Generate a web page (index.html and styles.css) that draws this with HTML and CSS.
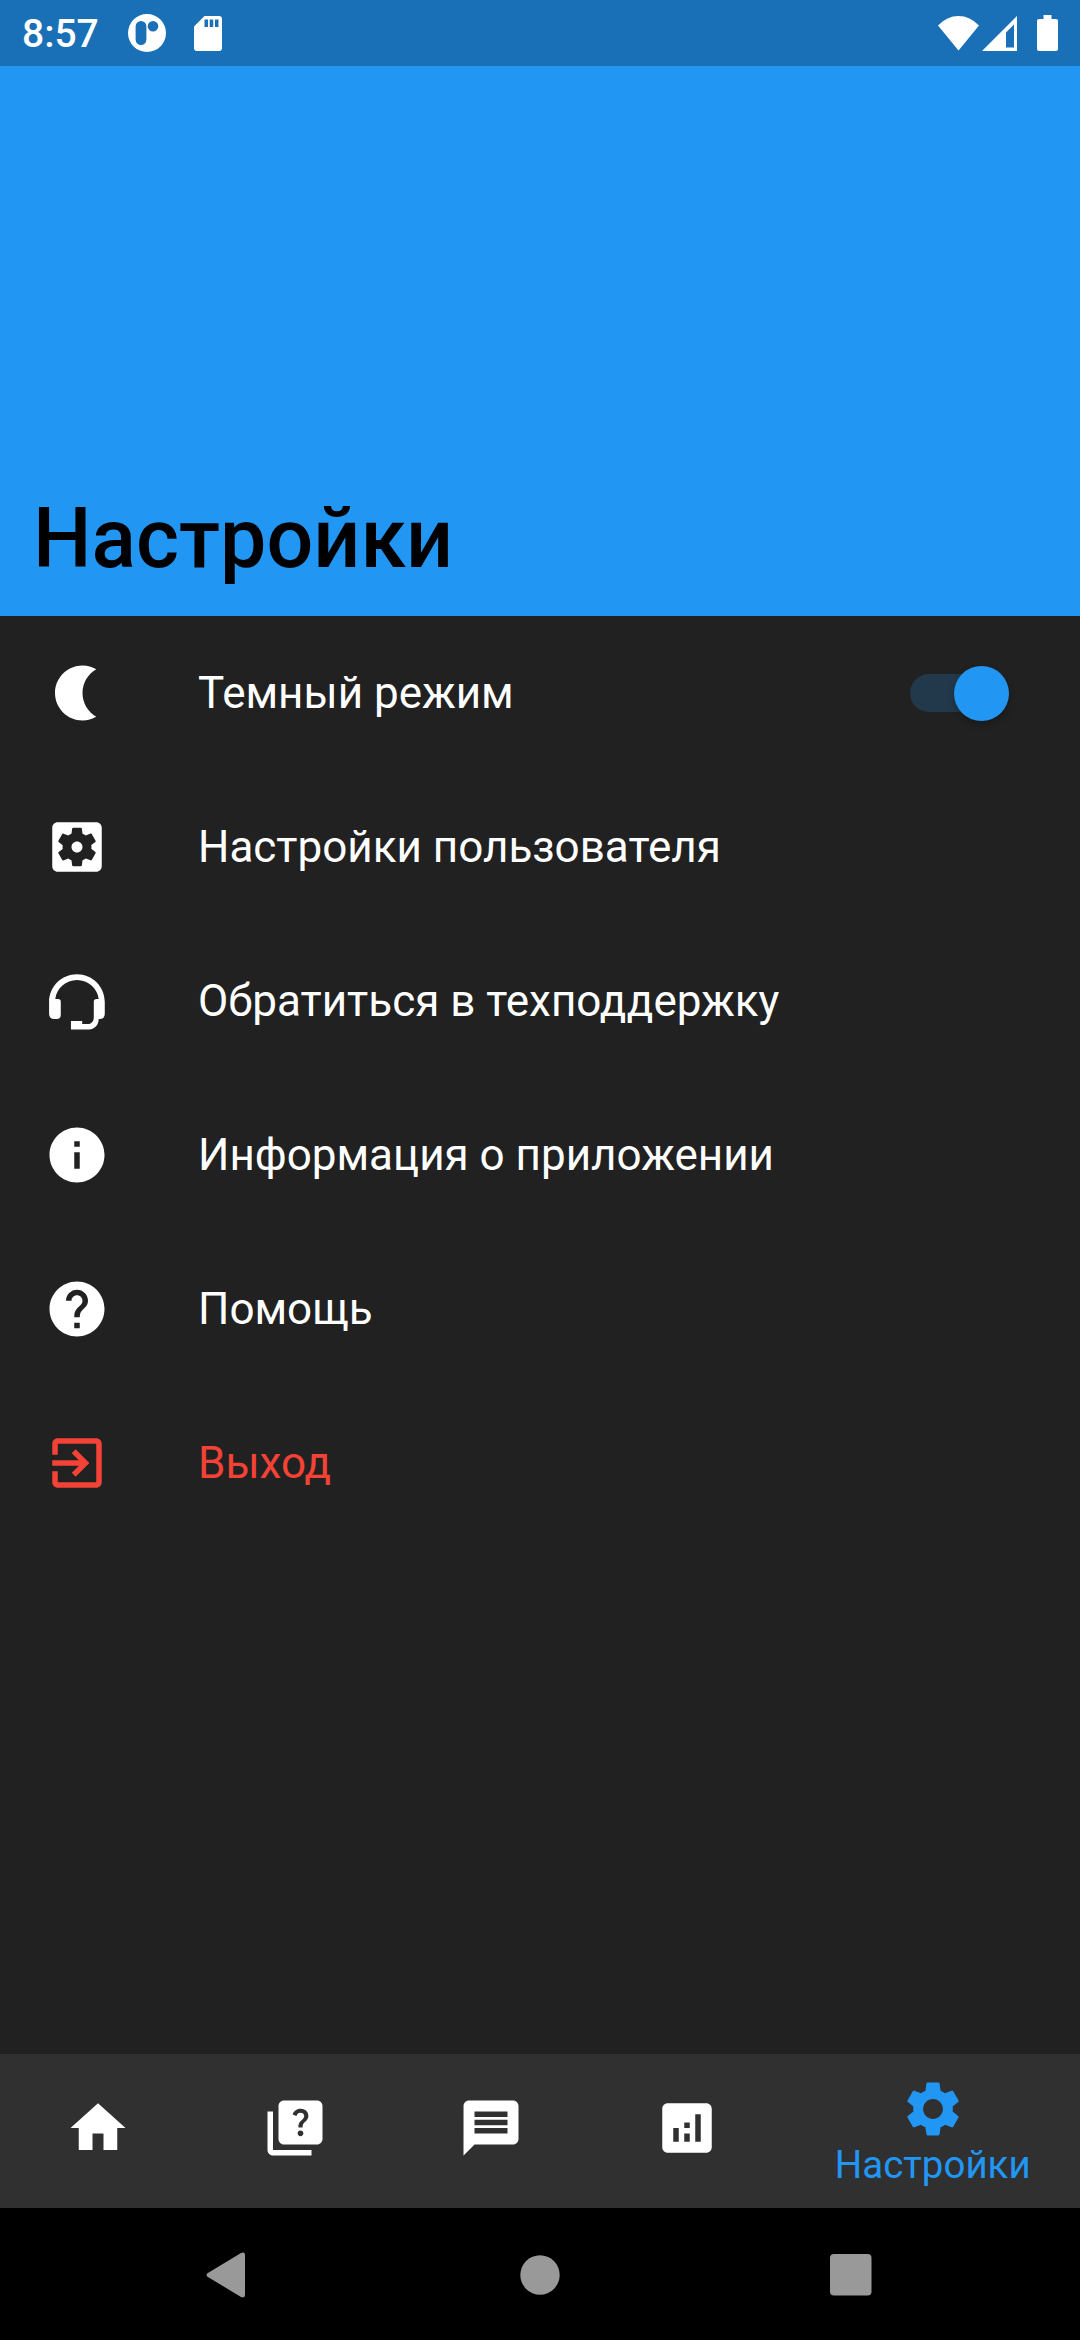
FILE: index.html
```html
<!DOCTYPE html>
<html lang="ru">
<head>
<meta charset="utf-8">
<title>Настройки</title>
<link rel="stylesheet" href="styles.css">
</head>
<body>
<div class="screen">
  <header class="header">
    <div class="status">
      <span class="time">8:57</span>
      <svg class="st-app" width="38" height="38" viewBox="0 0 38 38"><path fill-rule="evenodd" d="M19 0a19 19 0 1 0 0 38a19 19 0 1 0 0-38zM13 7a5.400 5.400 0 0 1 5.400 5.400v13.200a5.400 5.400 0 0 1-10.800 0V12.400a5.400 5.400 0 0 1 5.400-5.400zM25 7a5.300 5.300 0 1 1 0 10.600a5.300 5.300 0 1 1 0-10.600z"/></svg>
      <svg class="st-sd" width="28" height="35" viewBox="0 0 28 35"><path fill-rule="evenodd" d="M10.500 0H25a3 3 0 0 1 3 3v29a3 3 0 0 1-3 3H3a3 3 0 0 1-3-3V10.500zM10.500 3.500v7.500h3.500V3.500zM15.700 3.500v7.500h3.500V3.500zM21 3.500v7.500h3.500V3.500z"/></svg>
      <svg class="st-wifi" width="41" height="35" viewBox="0 0 41 35"><path d="M0 9.500Q9 0 20.500 0T41 9.500L20.500 34.500z"/></svg>
      <svg class="st-cell" width="35" height="35" viewBox="0 0 35 35"><path fill-rule="evenodd" d="M35 0V35H0zM32 8.500L24 16.500V31.500H32z"/></svg>
      <svg class="st-bat" width="21" height="36" viewBox="0 0 21 36"><path d="M6.500 0h8v4H19a2 2 0 0 1 2 2v28a2 2 0 0 1-2 2H2a2 2 0 0 1-2-2V6a2 2 0 0 1 2-2h4.500z"/></svg>
    </div>
    <h1 class="title">Настройки</h1>
  </header>
  <main class="list">
    <div class="row">
      <svg class="icon" viewBox="0 0 24 24"><path d="M14 2c1.820 0 3.530.5 5 1.350-2.990 1.730-5 4.950-5 8.650s2.010 6.920 5 8.650c-1.470.85-3.180 1.350-5 1.350-5.520 0-10-4.480-10-10S8.480 2 14 2z"/></svg>
      <span class="label">Темный режим</span>
      <span class="switch"><span class="knob"></span></span>
    </div>
    <div class="row">
      <svg class="icon" viewBox="0 0 24 24"><path d="M12 10c-1.100 0-2 .9-2 2s.9 2 2 2 2-.9 2-2-.9-2-2-2zm7-7H5c-1.110 0-2 .9-2 2v14c0 1.100.89 2 2 2h14c1.110 0 2-.9 2-2V5c0-1.100-.89-2-2-2zm-1.750 9c0 .23-.02.46-.05.68l1.480 1.160c.13.11.17.3.08.45l-1.400 2.420c-.09.15-.27.21-.43.15l-1.740-.7c-.36.28-.76.51-1.180.69l-.26 1.850c-.03.17-.18.3-.35.3h-2.800c-.17 0-.32-.13-.35-.29l-.26-1.850c-.43-.18-.82-.41-1.180-.69l-1.740.7c-.16.06-.34 0-.43-.15l-1.400-2.420c-.09-.15-.05-.34.08-.45l1.480-1.160c-.03-.23-.05-.46-.05-.69 0-.23.02-.46.05-.68l-1.480-1.160c-.13-.11-.17-.3-.08-.45l1.400-2.420c.09-.15.27-.21.43-.15l1.740.7c.36-.28.76-.51 1.180-.69l.26-1.850c.03-.17.18-.3.35-.3h2.800c.17 0 .32.13.35.29l.26 1.850c.43.18.82.41 1.180.69l1.740-.7c.16-.06.34 0 .43.15l1.400 2.420c.09.15.05.34-.08.45l-1.480 1.160c.03.23.05.46.05.69z"/></svg>
      <span class="label">Настройки пользователя</span>
    </div>
    <div class="row">
      <svg class="icon" viewBox="0 0 24 24"><path d="M22.100 12.400C22.100 6.800 17.600 2.300 12 2.300S1.850 6.800 1.850 12.400V16.700Q1.850 18.500 3.700 18.500H4.700Q6.100 18.500 6.100 17V12.300Q6.100 11.300 5.100 11.300H4.100C4.600 7.400 7.900 4.400 12 4.400S19.400 7.400 19.900 11.300H19.100Q18.100 11.300 18.100 12.300V17.900C18.100 19.500 17.200 20.400 15.800 20.400H13.900V19.300H9.800V22.400H15.800C18.200 22.400 19.900 20.800 19.900 18.500H20.300Q22.100 18.500 22.100 16.700z"/></svg>
      <span class="label">Обратиться в техподдержку</span>
    </div>
    <div class="row">
      <svg class="icon" viewBox="0 0 24 24"><path d="M12 2C6.480 2 2 6.480 2 12s4.480 10 10 10 10-4.480 10-10S17.520 2 12 2zm1 15h-2v-6h2v6zm0-8h-2V7h2v2z"/></svg>
      <span class="label">Информация о приложении</span>
    </div>
    <div class="row">
      <svg class="icon" viewBox="0 0 24 24"><path d="M12 2C6.480 2 2 6.480 2 12s4.480 10 10 10 10-4.480 10-10S17.520 2 12 2zm1 17h-2v-2h2v2zm2.070-7.750l-.9.92C13.450 12.900 13 13.500 13 15h-2v-.5c0-1.100.45-2.100 1.170-2.830l1.240-1.260c.37-.36.59-.86.59-1.410 0-1.100-.9-2-2-2s-2 .9-2 2H8c0-2.210 1.790-4 4-4s4 1.790 4 4c0 .88-.36 1.680-.93 2.250z"/></svg>
      <span class="label">Помощь</span>
    </div>
    <div class="row danger">
      <svg class="icon" viewBox="0 0 24 24"><path d="M10.090 15.590L11.500 17l5-5-5-5-1.410 1.410L12.670 11H3v2h9.670l-2.580 2.590zM19 3H5c-1.110 0-2 .9-2 2v4h2V5h14v14H5v-4H3v4c0 1.100.89 2 2 2h14c1.100 0 2-.9 2-2V5c0-1.100-.9-2-2-2z"/></svg>
      <span class="label">Выход</span>
    </div>
  </main>
  <nav class="tabs">
    <a class="tab"><svg class="icon" viewBox="0 0 24 24"><path d="M10 20v-6h4v6h5v-8h3L12 3 2 12h3v8z"/></svg></a>
    <a class="tab"><svg class="icon" viewBox="0 0 24 24"><path d="M4 6H2v14c0 1.100.9 2 2 2h14v-2H4V6z"/><path d="M20 2H8c-1.100 0-2 .9-2 2v12c0 1.100.9 2 2 2h12c1.100 0 2-.9 2-2V4c0-1.100-.9-2-2-2zm-5.990 13c-.59 0-1.050-.47-1.050-1.050 0-.59.47-1.040 1.050-1.040.59 0 1.040.45 1.040 1.040-.01.58-.45 1.050-1.040 1.050zm2.500-6.170c-.63.93-1.230 1.210-1.560 1.810-.13.24-.18.4-.18 1.180h-1.520c0-.41-.06-1.080.26-1.650.41-.73 1.180-1.160 1.630-1.800.48-.68.21-1.940-1.140-1.940-.88 0-1.320.67-1.500 1.230l-1.370-.57C11.510 5.960 12.520 5 13.990 5c1.230 0 2.080.56 2.510 1.260.37.61.58 1.730.01 2.570z"/></svg></a>
    <a class="tab"><svg class="icon" viewBox="0 0 24 24"><path d="M20 2H4c-1.100 0-1.990.9-1.990 2L2 22l4-4h14c1.100 0 2-.9 2-2V4c0-1.100-.9-2-2-2zm-2 12H6v-2h12v2zm0-3H6V9h12v2zm0-3H6V6h12v2z"/></svg></a>
    <a class="tab"><svg class="icon" viewBox="0 0 24 24"><path d="M19 3H5c-1.100 0-2 .9-2 2v14c0 1.100.9 2 2 2h14c1.100 0 2-.9 2-2V5c0-1.100-.9-2-2-2zM9 17H7v-5h2v5zm4 0h-2v-3h2v3zm0-5h-2v-2h2v2zm4 5h-2V7h2v10z"/></svg></a>
    <a class="tab active"><svg class="icon" viewBox="0 0 24 24"><path d="M19.140 12.940c.04-.3.06-.61.06-.94 0-.32-.02-.64-.07-.94l2.030-1.580c.18-.14.23-.41.12-.61l-1.920-3.320c-.12-.22-.37-.29-.59-.22l-2.390.96c-.5-.38-1.030-.7-1.620-.94l-.36-2.540c-.04-.24-.24-.41-.48-.41h-3.840c-.24 0-.43.17-.47.41l-.36 2.540c-.59.24-1.130.57-1.620.94l-2.390-.96c-.22-.08-.47 0-.59.22L2.740 8.870c-.12.21-.08.47.12.61l2.030 1.580c-.05.3-.09.63-.09.94s.02.64.07.94l-2.030 1.580c-.18.14-.23.41-.12.61l1.920 3.320c.12.22.37.29.59.22l2.390-.96c.5.38 1.030.7 1.620.94l.36 2.540c.05.24.24.41.48.41h3.840c.24 0 .44-.17.47-.41l.36-2.540c.59-.24 1.130-.56 1.620-.94l2.390.96c.22.08.47 0 .59-.22l1.920-3.320c.12-.22.07-.47-.12-.61l-2.010-1.580zM12 15.600c-1.980 0-3.600-1.620-3.600-3.600s1.620-3.600 3.600-3.600 3.600 1.620 3.600 3.600-1.620 3.600-3.600 3.600z"/></svg><span class="tab-label">Настройки</span></a>
  </nav>
  <footer class="system">
    <svg width="40" height="46" viewBox="0 0 40 46"><path d="M1.500 21.300L35 1Q39 -.5 39 3V43Q39 46.500 35 45L1.500 24.700Q-.5 23 1.500 21.300z"/></svg>
    <svg width="40" height="40" viewBox="0 0 40 40"><circle cx="20" cy="20" r="19.700"/></svg>
    <svg width="42" height="42" viewBox="0 0 42 42"><rect width="41.500" height="41.500" rx="4"/></svg>
  </footer>
</div>
</body>
</html>
```
FILE: styles.css
```css
* { box-sizing: border-box; }
body {
  margin: 0;
  background: #212121;
  color: #fff;
  font-family: Roboto, "Noto Sans", sans-serif;
}
svg { display: block; flex: none; fill: currentColor; }
.screen {
  display: flex;
  flex-direction: column;
  width: 1080px;
  height: 2340px;
}
.header {
  display: flex;
  flex-direction: column;
  justify-content: space-between;
  height: 616px;
  background: #2196f3;
}
.status {
  display: flex;
  align-items: center;
  height: 66px;
  padding: 0 22px;
  background: #1970b6;
}
.time {
  width: 106px;
  font-size: 39px;
  font-weight: 500;
  line-height: 46px;
  padding-top: 2px;
}
.st-sd { margin: 1px 0 0 28px; }
.st-wifi { margin-left: auto; }
.st-cell { margin-left: 3px; }
.st-bat { margin-left: 20px; }
.title {
  margin: 0;
  padding: 0 33px 29px;
  color: #000;
  font-size: 82.5px;
  font-weight: 500;
  line-height: 97px;
}
.list { flex: 1; }
.row {
  display: flex;
  align-items: center;
  height: 154px;
  padding: 0 79px 0 44px;
}
.icon { width: 66px; height: 66px; }
.label {
  flex: 1;
  margin-left: 88px;
  font-size: 44px;
  line-height: 52px;
}
.danger { color: #f44336; }
.switch {
  display: flex;
  align-items: center;
  justify-content: flex-end;
  width: 91px;
  height: 38.5px;
  border-radius: 20px;
  background: #22384b;
}
.knob {
  flex: none;
  width: 55px;
  height: 55px;
  margin-right: -8px;
  border-radius: 50%;
  background: #2196f3;
  box-shadow: 0 4px 7px rgba(0, 0, 0, .22);
}
.tabs {
  display: flex;
  height: 154px;
  background: #303030;
}
.tab {
  display: flex;
  flex: 1;
  flex-direction: column;
  align-items: center;
  padding-top: 41px;
}
.active {
  flex: 1.5;
  padding-top: 22px;
  color: #2196f3;
}
.tab-label {
  font-size: 38.5px;
  line-height: 46px;
}
.system {
  display: grid;
  grid-template-columns: 314px 310px auto;
  align-items: center;
  height: 132px;
  padding: 1px 0 0 206px;
  background: #000;
  color: #999;
}
```
